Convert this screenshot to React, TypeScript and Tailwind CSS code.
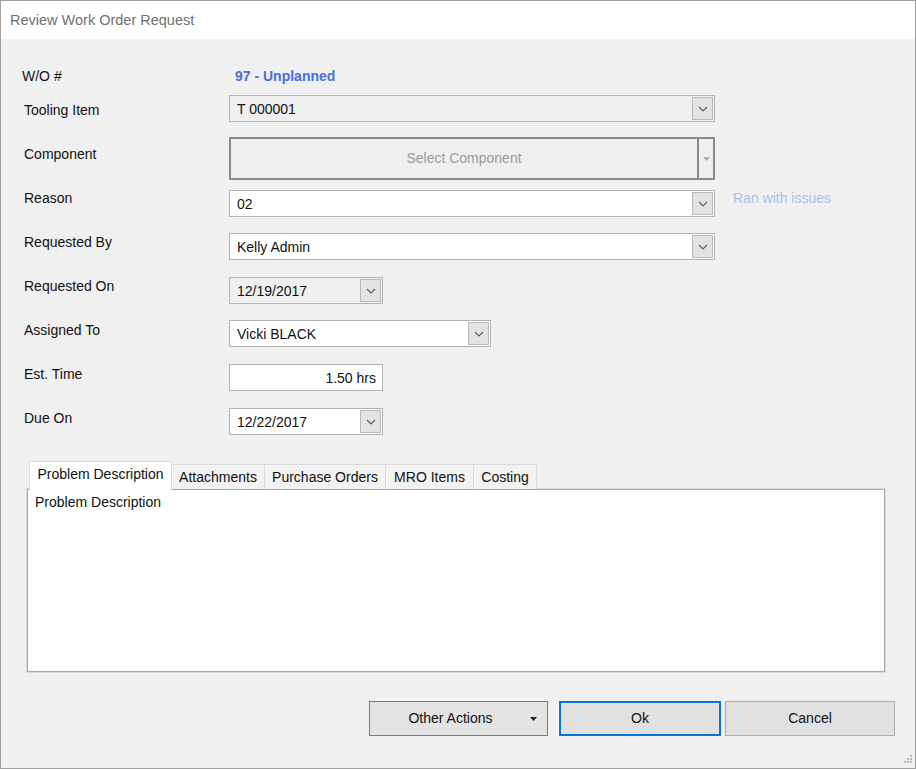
import React from 'react';

const Chevron = () => (
  <svg width="10" height="6" viewBox="0 0 10 6" className="block">
    <path d="M1 1 L5 5 L9 1" fill="none" stroke="#606060" strokeWidth="1.2" />
  </svg>
);

const DropButton = () => (
  <div className="w-[21px] h-[23px] mr-[1px] flex items-center justify-center bg-[#e3e3e3] border border-[#b9b9b9]">
    <Chevron />
  </div>
);

type ComboProps = { value: string; width: string; gray?: boolean };

const Combo = ({ value, width, gray }: ComboProps) => (
  <div
    className={`${width} h-[27px] flex items-center justify-between border border-[#b3b3b3] ${
      gray ? 'bg-[#efefef]' : 'bg-white'
    }`}
  >
    <span className="pl-[7px] pt-[2px] text-[14px] text-[#111]">{value}</span>
    <DropButton />
  </div>
);

const Row = ({ label, top, children }: { label: string; top: string; children: React.ReactNode }) => (
  <div className="flex items-start h-[44px]">
    <div className="w-[205px] pt-[10px] text-[14px] leading-[17px] text-[#111]">{label}</div>
    <div className={top}>{children}</div>
  </div>
);

const tabs = ['Attachments', 'Purchase Orders', 'MRO Items', 'Costing'];
const tabWidths = ['w-[93px]', 'w-[121px]', 'w-[88px]', 'w-[63px]'];

export default function App() {
  return (
    <div className="w-[916px] h-[769px] border border-[#a0a0a0] bg-[#f0f0f0] flex flex-col relative font-['Liberation_Sans',Arial,sans-serif]">
      {/* title bar */}
      <div className="h-[38px] bg-white flex items-center pl-[9px] pt-[2px] text-[14.5px] text-[#707070]">
        Review Work Order Request
      </div>

      <div className="flex-1 flex flex-col">
        {/* W/O number */}
        <div className="flex h-[53px] pt-[29px] pl-[21px] text-[14px] leading-[17px]">
          <div className="w-[213px] text-[#111]">W/O #</div>
          <div className="font-bold text-[#4a6fdc]">97 - Unplanned</div>
        </div>

        <div className="pl-[23px] flex flex-col">
          <Row label="Tooling Item" top="mt-[3px]">
            <Combo value="T 000001" width="w-[486px]" gray />
          </Row>

          <Row label="Component" top="mt-[1px]">
            <div className="flex h-[43px] w-[486px]">
              <div className="flex-1 flex items-center justify-center bg-[#efefef] border-2 border-[#8a8a8a] text-[14px] text-[#9a9a9a]">
                Select Component
              </div>
              <div className="w-[16px] flex items-center justify-center bg-[#efefef] border-2 border-l-0 border-[#8a8a8a]">
                <svg width="7" height="4" viewBox="0 0 7 4">
                  <path d="M0 0 H7 L3.5 4 Z" fill="#a8a8a8" />
                </svg>
              </div>
            </div>
          </Row>

          <Row label="Reason" top="mt-[10px] flex items-start">
            <Combo value="02" width="w-[486px]" />
            <span className="ml-[18px] -mt-[2px] text-[14px] text-[#a9bfe2]">Ran with issues</span>
          </Row>

          <Row label="Requested By" top="mt-[9px]">
            <Combo value="Kelly Admin" width="w-[486px]" />
          </Row>

          <Row label="Requested On" top="mt-[9px]">
            <Combo value="12/19/2017" width="w-[154px]" gray />
          </Row>

          <Row label="Assigned To" top="mt-[8px]">
            <Combo value="Vicki BLACK" width="w-[262px]" />
          </Row>

          <Row label="Est. Time" top="mt-[8px]">
            <div className="w-[154px] h-[27px] bg-white border border-[#b3b3b3] flex items-center justify-end pr-[6px] pt-[2px] text-[14px] text-[#111]">
              1.50 hrs
            </div>
          </Row>

          <Row label="Due On" top="mt-[8px]">
            <Combo value="12/22/2017" width="w-[154px]" />
          </Row>
        </div>

        {/* tabs */}
        <div className="mt-[17px] ml-[26px] w-[858px] flex flex-col">
          <div className="flex items-end h-[29px] pl-[2px] relative z-10 -mb-px">
            <div className="w-[143px] h-[29px] bg-white border border-b-0 border-[#d9d9d9] flex items-center justify-center text-[14px] text-[#111] pb-[3px]">
              Problem Description
            </div>
            {tabs.map((t, i) => (
              <div
                key={t}
                className={`${tabWidths[i]} h-[25px] mb-px bg-[#f2f2f2] border border-l-0 border-b-0 border-[#d9d9d9] flex items-center justify-center text-[14px] text-[#111]`}
              >
                {t}
              </div>
            ))}
          </div>
          <div className="h-[183px] bg-white border border-[#a8a8a8] ring-1 ring-[#dadada] px-[7px] pt-[2px] text-[14px] text-[#111]">
            Problem Description
          </div>
        </div>

        {/* buttons */}
        <div className="mt-[29px] flex justify-end pr-[20px] text-[14px] text-[#111]">
          <div className="w-[179px] h-[35px] bg-[#e3e3e3] border border-[#7a7a7a] flex items-center relative">
            <span className="flex-1 text-center pr-[16px]">Other Actions</span>
            <svg width="7" height="4" viewBox="0 0 7 4" className="absolute right-[10px] top-[15px]">
              <path d="M0 0 H7 L3.5 4 Z" fill="#222" />
            </svg>
          </div>
          <div className="ml-[11px] w-[162px] h-[35px] bg-[#e1e1e1] border-2 border-[#0078d7] flex items-center justify-center">
            Ok
          </div>
          <div className="ml-[4px] w-[170px] h-[35px] bg-[#e1e1e1] border border-[#adadad] flex items-center justify-center">
            Cancel
          </div>
        </div>
      </div>

      {/* size grip */}
      <svg width="10" height="10" viewBox="0 0 10 10" className="absolute right-[3px] bottom-[3px]">
        {[
          [8, 0],
          [5, 3],
          [8, 3],
          [2, 6],
          [5, 6],
          [8, 6],
        ].map(([x, y]) => (
          <rect key={`${x}-${y}`} x={x} y={y} width="2" height="2" fill="#b8b8b8" />
        ))}
      </svg>
    </div>
  );
}
